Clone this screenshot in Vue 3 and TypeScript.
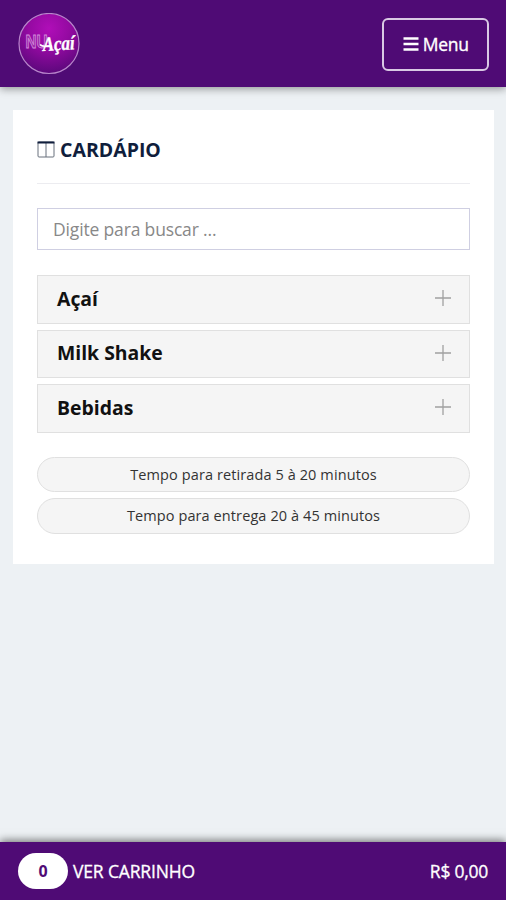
<script setup lang="ts">
import { ref } from 'vue'

const categories: string[] = ['Açaí', 'Milk Shake', 'Bebidas']
const times: string[] = ['Tempo para retirada 5 à 20 minutos', 'Tempo para entrega 20 à 45 minutos']
const search = ref('')
const cartCount = ref(0)
</script>

<template>
  <div class="page">
    <header class="topbar">
      <svg class="logo" viewBox="0 0 62 62">
        <defs>
          <radialGradient id="logo-fill" cx="50%" cy="25%" r="75%">
            <stop offset="0" stop-color="#b00eb8" />
            <stop offset="0.45" stop-color="#950aa2" />
            <stop offset="1" stop-color="#5c087c" />
          </radialGradient>
        </defs>
        <circle cx="31" cy="30.5" r="30" fill="url(#logo-fill)" stroke="#b886cb" stroke-width="1.2" />
        <text class="logo-nu" x="7.5" y="34.5" textLength="22" lengthAdjust="spacingAndGlyphs">NU</text>
        <text class="logo-acai" x="25" y="38" textLength="32" lengthAdjust="spacingAndGlyphs" transform="rotate(-3 25 38)">Açaí</text>
        <path d="M22 31.5 Q25 34.5 34 33" fill="none" stroke="#fff" stroke-width="1.6" />
      </svg>
      <button class="menu" type="button">
        <svg class="bars" viewBox="0 0 16 14"><path d="M.5 1.5h15M.5 7h15M.5 12.5h15" stroke="#fff" stroke-width="2.6" /></svg>
        <span>Menu</span>
      </button>
    </header>

    <main class="card">
      <h1 class="title">
        <svg class="columns" viewBox="0 0 18 17">
          <rect x="1" y="1" width="16" height="15" rx="1" fill="none" stroke="#68717d" />
          <path d="M9 2v14" stroke="#68717d" />
          <path d="M.5 1.5h17" stroke="#101e3c" stroke-width="2" />
        </svg>
        <span>CARDÁPIO</span>
      </h1>
      <input v-model="search" class="search" type="text" placeholder="Digite para buscar ..." />
      <div class="categories">
        <div v-for="name in categories" :key="name" class="category">
          <span>{{ name }}</span>
          <svg class="plus" viewBox="0 0 16 16"><path d="M0 8h16M8 0v16" stroke="#a0a0a0" stroke-width="1.3" /></svg>
        </div>
      </div>
      <div class="times">
        <div v-for="time in times" :key="time" class="time"><span>{{ time }}</span></div>
      </div>
    </main>

    <footer class="cart">
      <span class="count">{{ cartCount }}</span>
      <span class="cart-label">VER CARRINHO</span>
      <span class="total">R$ 0,00</span>
    </footer>
  </div>
</template>

<style>
body {
  margin: 0;
}
</style>

<style scoped>
.page {
  display: flex;
  flex-direction: column;
  height: 900px;
  overflow: hidden;
  background: #edf1f4;
  font-family: 'Open Sans', 'Noto Sans', sans-serif;
}
.topbar {
  box-sizing: border-box;
  display: flex;
  flex: none;
  align-items: center;
  justify-content: space-between;
  height: 87px;
  padding: 0 17px 0 18px;
  background: #4f0b75;
  box-shadow: 0 2px 8px rgba(0, 0, 0, 0.38);
}
.logo {
  width: 62px;
  height: 62px;
}
.logo-nu {
  font: bold 19px 'Liberation Sans', sans-serif;
  fill: #9a2aa8;
  stroke: #d48bdc;
  stroke-width: 0.9px;
}
.logo-acai {
  font: italic bold 20px 'Liberation Serif', serif;
  fill: #fff;
  stroke: #fff;
  stroke-width: 0.4px;
}
.menu {
  box-sizing: border-box;
  display: flex;
  align-items: center;
  justify-content: center;
  gap: 4px;
  width: 107.5px;
  height: 53px;
  margin-top: 2px;
  padding: 0 0 1px 1px;
  border: 2px solid #d9c9e4;
  border-radius: 6px;
  background: transparent;
  color: #fff;
  font: 500 17.5px 'Open Sans', sans-serif;
  letter-spacing: -0.3px;
  -webkit-text-stroke: 0.35px #fff;
}
.bars {
  width: 16px;
  height: 14px;
}
.card {
  box-sizing: border-box;
  flex: none;
  height: 454px;
  margin: 23px 12px 0 13px;
  padding: 0 24px;
  background: #fff;
}
.title {
  box-sizing: border-box;
  display: flex;
  align-items: center;
  gap: 5px;
  height: 74px;
  margin: 0 0 24px;
  padding-top: 5px;
  border-bottom: 1px solid #ececf0;
  color: #101e3c;
  font-size: 19.5px;
  font-weight: 700;
}
.columns {
  width: 18px;
  height: 17px;
}
.search {
  box-sizing: border-box;
  display: block;
  width: 100%;
  height: 42px;
  padding: 0 15px;
  border: 1px solid #cfcfe2;
  border-radius: 0;
  outline: none;
  background: #fff;
  font: 17.5px 'Open Sans', sans-serif;
  letter-spacing: -0.16px;
}
.search::placeholder {
  color: #888;
  opacity: 1;
}
.categories {
  display: grid;
  gap: 6px;
  margin-top: 25px;
}
.category {
  box-sizing: border-box;
  display: flex;
  align-items: center;
  justify-content: space-between;
  height: 48.5px;
  padding: 0 18.5px 2px 19px;
  border: 1px solid #e0e0e0;
  background: #f5f5f5;
  color: #111;
  font-size: 19.4px;
  font-weight: 700;
}
.plus {
  width: 16px;
  height: 16px;
}
.times {
  display: grid;
  gap: 6px;
  margin-top: 24px;
}
.time {
  box-sizing: border-box;
  display: flex;
  align-items: center;
  justify-content: center;
  height: 35.5px;
  border: 1px solid #e0e0e0;
  border-radius: 18px;
  background: #f5f5f5;
  color: #333;
  font-size: 14.5px;
  letter-spacing: 0.1px;
}
.cart {
  box-sizing: border-box;
  display: flex;
  flex: none;
  align-items: center;
  height: 58px;
  margin-top: auto;
  padding: 0 18px;
  background: #4f0b75;
  box-shadow: 0 -2px 8px rgba(0, 0, 0, 0.5);
  color: #fff;
  font-size: 17.5px;
  font-weight: 500;
  -webkit-text-stroke: 0.3px #fff;
}
.count {
  display: flex;
  align-items: center;
  justify-content: center;
  width: 50px;
  height: 36px;
  margin-right: 5px;
  border-radius: 18px;
  background: #fff;
  color: #4f0b75;
  font-size: 16px;
  font-weight: 700;
  -webkit-text-stroke: 0;
}
.cart-label {
  letter-spacing: -0.15px;
}
.total {
  margin-left: auto;
  letter-spacing: -0.25px;
}
</style>
